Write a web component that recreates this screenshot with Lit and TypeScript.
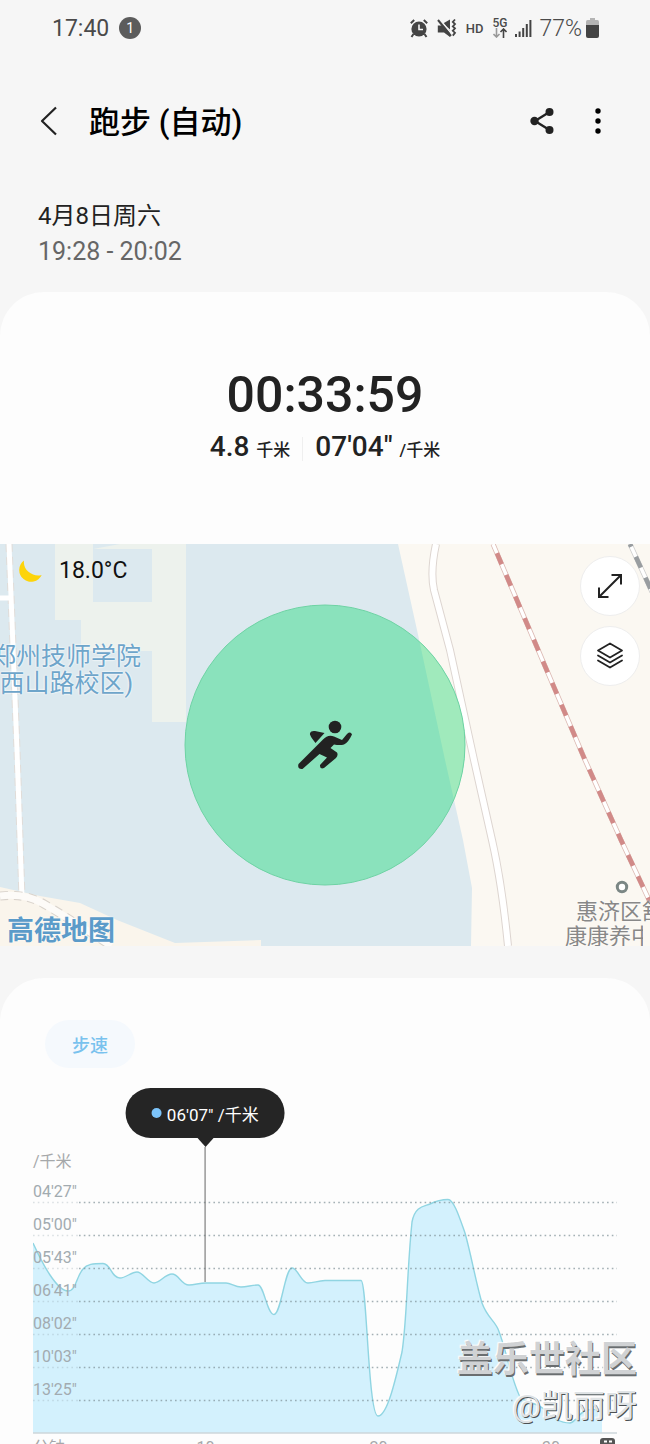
import { LitElement, html, svg, css } from "lit";
import { customElement, property } from "lit/decorators.js";

const sans = css`Roboto, "Noto Sans CJK SC", sans-serif`;

@customElement("status-bar")
class StatusBar extends LitElement {
  static styles = css`
    :host { display: flex; align-items: center; justify-content: space-between; height: 56px; padding: 0 51px 0 52px; color: #4a4a4a; font: 23px ${sans}; }
    .side { display: flex; align-items: center; }
    .badge { display: grid; place-items: center; width: 22px; height: 22px; margin-left: 10px; border-radius: 50%; background: #5c5c5c; color: #fff; font-size: 14px; line-height: 22px; }
    .hd { font-size: 13px; font-weight: 500; margin: 0 9px; }
    .net { display: flex; flex-direction: column; align-items: center; font-size: 12px; line-height: 10px; font-weight: 500; margin-right: 8px; }
    .pct { margin: 0 4px 0 7px; font-weight: 300; }
    svg { display: block; }
    .gap { margin-left: 9px; }
  `;
  render() {
    return html`
      <div class="side"><span>17:40</span><span class="badge">1</span></div>
      <div class="side">
        <svg width="18" height="20" viewBox="0 0 18 20" fill="#444"><circle cx="9" cy="11" r="7.6"/><path d="M0.8 5.2 4.2 2M17.2 5.2 13.8 2M3.5 16 1.5 19M14.5 16l2 3" stroke="#444" stroke-width="2" fill="none"/><path d="M9 6.5V11.5H13" stroke="#f6f6f6" stroke-width="1.6" fill="none"/></svg>
        <svg class="gap" width="20" height="20" viewBox="0 0 20 20"><path d="M6 5.500 13 1.500V11.5Z" fill="#444"/><path d="M0.800 7.500H6.500L13 13V19L7 14.500H0.800Z" fill="#444"/><path d="M3 1.500 14.500 16" stroke="#f6f6f6" stroke-width="1.500"/><path d="M1 2 14 18" stroke="#444" stroke-width="2"/><path d="M18 1.5 15.8 4l2.2 2-2.2 2.4 2.2 2-2.2 2.4 2.2 2-2.2 2.8" stroke="#444" stroke-width="1.8" fill="none"/></svg>
        <span class="hd">HD</span>
        <span class="net">5G
          <svg width="14" height="10" viewBox="0 0 14 10" fill="none" stroke-width="1.6"><path d="M3.5 0V9M0.5 6l3 3 3-3" stroke="#999"/><path d="M10.5 10V1M7.5 4l3-3 3 3" stroke="#444"/></svg>
        </span>
        <svg width="17" height="17" viewBox="0 0 17 17" fill="#444"><path d="M0 14h2v3H0zM3.6 11.5h2V17h-2zM7.2 8h2v9h-2zM10.8 4h2v13h-2zM14.4 0h2v17h-2z"/></svg>
        <span class="pct">77%</span>
        <svg width="13" height="20" viewBox="0 0 13 20"><path d="M4 0h5v2h2.5Q13 2 13 4v5H0V4Q0 2 1.500 2H4z" fill="#b4b4b4"/><path d="M0 7h13v11q0 2-2 2H2q-2 0-2-2z" fill="#444"/></svg>
      </div>`;
  }
}

@customElement("activity-header")
class ActivityHeader extends LitElement {
  static styles = css`
    :host { display: block; font-family: ${sans}; }
    .bar { display: flex; align-items: center; height: 130px; padding: 0 39px 0 36px; }
    h1 { flex: 1; margin: 0 0 0 30px; padding-top: 3px; font-size: 31px; line-height: 40px; font-weight: 500; color: #000; }
    button { display: grid; place-items: center; padding: 0; border: 0; background: none; height: 40px; cursor: pointer; }
    .back { width: 23px; }
    .share { width: 26px; margin-right: 30px; }
    .more { width: 26px; }
    .when { display: flex; flex-direction: column; padding: 12px 38px 22px; font-size: 25px; line-height: 36px; color: #222; }
    .range { color: #666; }
    .day { font-size: 24px; }
  `;
  render() {
    return html`
      <div class="bar">
        <button class="back" aria-label="返回"><svg width="20" height="30" viewBox="0 0 20 30"><path d="M18 1.500 4 15l14 13.500" fill="none" stroke="#222" stroke-width="2.200" stroke-linejoin="round"/></svg></button>
        <h1>跑步 (自动)</h1>
        <button class="share" aria-label="分享"><svg width="26" height="28" viewBox="0 0 26 28"><path d="M20.500 5 6 14l14.500 9" fill="none" stroke="#222" stroke-width="2.400"/><g fill="#222"><circle cx="20.500" cy="5" r="4"/><circle cx="5.500" cy="14" r="4.200"/><circle cx="20.500" cy="23" r="4"/></g></svg></button>
        <button class="more" aria-label="更多"><svg width="6" height="28" viewBox="0 0 6 28"><circle cx="3" cy="4" r="2.700"/><circle cx="3" cy="14" r="2.700"/><circle cx="3" cy="24" r="2.700"/></svg></button>
      </div>
      <div class="when"><span class="day">4月8日周六</span><span class="range">19:28 - 20:02</span></div>`;
  }
}

@customElement("run-summary")
class RunSummary extends LitElement {
  static styles = css`
    :host { display: flex; flex-direction: column; align-items: center; padding: 71px 0 74px; border-radius: 44px 44px 0 0; background: #fdfdfd; color: #222; font-family: ${sans}; font-weight: 500; }
    .time { font-size: 50px; line-height: 64px; }
    .stats { display: flex; align-items: center; line-height: 39px; font-size: 28px; }
    .unit { font-size: 17px; }
    .rule { width: 1px; height: 24px; margin: 0 12px; background: #efefef; }
  `;
  render() {
    return html`
      <div class="time">00:33:59</div>
      <div class="stats">
        <span>4.8 <span class="unit">千米</span></span>
        <span class="rule"></span>
        <span>07'04" <span class="unit">/千米</span></span>
      </div>`;
  }
}

@customElement("route-map")
class RouteMap extends LitElement {
  static styles = css`
    :host { display: grid; position: relative; overflow: hidden; height: 402px; font-family: ${sans}; background: #dce9ef; }
    .ground { grid-area: 1 / 1; width: 100%; height: 402px; }
    .over { grid-area: 1 / 1; display: flex; justify-content: space-between; align-items: flex-start; padding: 12px 10px 0 19px; z-index: 1; }
    .weather { display: flex; align-items: center; gap: 15px; padding-top: 1px; font-size: 23px; line-height: 28px; color: #111; }
    .tools { display: flex; flex-direction: column; gap: 10px; }
    button { display: grid; place-items: center; width: 60px; height: 60px; padding: 0; border: 1px solid #eee; border-radius: 50%; background: #fff; cursor: pointer; }
    .place { position: absolute; white-space: nowrap; }
    .school { left: -9px; top: 99px; font-size: 25px; line-height: 27px; color: #6ea5ca; text-shadow: 0 0 2px #fff, 0 0 2px #fff; }
    .care { left: 565px; top: 355px; width: 78px; font-size: 22px; line-height: 25px; color: #888; text-shadow: 0 0 2px #fff; }
    .indent { padding-left: 11px; }
    .cut { display: block; overflow: hidden; }
    .brand { left: 7px; bottom: 0; font-size: 27px; line-height: 30px; font-weight: 700; color: #5b9bc9; text-shadow: 0 0 2px #fff; }
  `;
  render() {
    return html`
      <svg class="ground" viewBox="0 0 650 402" preserveAspectRatio="xMidYMid slice">
        <rect width="650" height="402" fill="#dce9ef"/>
        <path d="M55 0H93V5L120 0H186V178H152V107H81V76H55Z" fill="#edf2ed"/>
        <path d="M93 5H152V58H93Z" fill="#dce9ef"/>
        <path d="M398 0 417 86 445 216 463 296 472 344 471 402H650V0Z" fill="#fbf8f2"/>
        <path d="M0 343 40 352 80 359 117 376 175 399 261 396V402H0Z" fill="#faf5ec"/>
        <g fill="none">
          <path d="M9 0 17 206 22 354" stroke="#e0dcd8" stroke-width="7" stroke-dasharray="8 5"/>
          <path d="M0 54H12M9 0 17 206 22 354" stroke="#fff" stroke-width="5"/>
          <path d="M0 352Q25 349 44 360T80 382Q97 392 111 402" stroke="#d9d3cc" stroke-width="9" stroke-dasharray="8 6"/>
          <path d="M0 352Q25 349 44 360T80 382Q97 392 111 402" stroke="#fdfbf8" stroke-width="7"/>
          <path d="M436 0Q430 28 434 46L450 106 474 216 492 296Q502 340 508 402" stroke="#ddd5d0" stroke-width="8"/>
          <path d="M436 0Q430 28 434 46L450 106 474 216 492 296Q502 340 508 402" stroke="#fff" stroke-width="6"/>
          <path d="M493 0 585 216 621 296 650 358" stroke="#dcb9b3" stroke-width="5"/>
          <path d="M493 0 585 216 621 296 650 358" stroke="#fff" stroke-width="3.400"/>
          <path d="M493 0 585 216 621 296 650 358" stroke="#d18a88" stroke-width="4.600" stroke-dasharray="12 11.500" stroke-dashoffset="-10"/>
          <path d="M630 0 652 48" stroke="#ccc" stroke-width="5"/>
          <path d="M630 0 652 48" stroke="#fff" stroke-width="3.400"/>
          <path d="M630 0 652 48" stroke="#999da0" stroke-width="4.600" stroke-dasharray="12 11" stroke-dashoffset="-14"/>
        </g>
        <circle cx="325" cy="201" r="140" fill="#8ae2bc"/>
        <clipPath id="zone"><circle cx="325" cy="201" r="140"/></clipPath>
        <path d="M398 0 417 86 445 216 463 296V402H650V0Z" fill="#a0eabc" clip-path="url(#zone)"/>
        <circle cx="325" cy="201" r="140" fill="none" stroke="#6ed3a4"/>
        <g transform="translate(280 156)" fill="#222">
          <circle cx="55" cy="27" r="6.300"/>
          <path d="M30 33Q31 30.500 35 31L44.500 33 35.500 43Q29 35 30 33Z"/>
          <path d="M18.500 64 43 39.500Q48 34 54 36.500L62 40 67 34Q70.500 31 72 34.500 68 43 64 44.500 60 45.500 54 44.500L50.500 48 57 52.500Q58.500 55 56 58L44 68Q39.500 69.500 40 65L47 57.500 39.500 54 22.500 69Q17 69.500 18.500 64Z"/>
        </g>
        <circle cx="622" cy="343" r="4.700" fill="#fff" stroke="#7b8785" stroke-width="3"/>
      </svg>
      <div class="over">
        <div class="weather">
          <svg width="25" height="24" viewBox="0 0 25 24"><path d="M5 1.500A11.800 11.800 0 1 0 22.700 16C15 18.500 3.500 12 5 1.500Z" fill="#fdd40a"/></svg>
          <span>18.0°C</span>
        </div>
        <div class="tools">
          <button aria-label="全屏"><svg width="26" height="26" viewBox="0 0 26 26" fill="none" stroke="#222" stroke-width="2"><path d="M2.500 23.500 23.500 2.500M14.500 2H24V11.500M2 14.500V24H11.500"/></svg></button>
          <button aria-label="图层"><svg width="28" height="28" viewBox="0 0 28 28" fill="none" stroke="#222" stroke-width="1.800" stroke-linejoin="round" stroke-linecap="round"><path d="M14 1.500 26 8.500 14 15.500 2 8.500ZM2 13.500l12 7 12-7M2 18.500l12 7 12-7"/></svg></button>
        </div>
      </div>
      <div class="place school">郑州技师学院<br>(西山路校区)</div>
      <div class="place care"><span class="indent">惠济区舒</span><span class="cut">康康养中</span></div>
      <div class="place brand">高德地图</div>`;
  }
}

const paceTicks = ["04'27\"", "05'00\"", "05'43\"", "06'41\"", "08'02\"", "10'03\"", "13'25\""];
const paceCurve =
  "M0 73C6 86 11 96 17 105S30 121 35 121C43 121 43 107 50 99 54 94 60 93.500 70 93.500 78 93.500 78 108 87 108 93 108 98 102 104 102S115 113 121 113 132 104 139 104 148 115 156 115C162 115 166 113 173 113H193C198 113 202 117 208 117 214 117 219 115 225 115 231 115 234 144.500 241 144.500S252 98 259 98C265 98 268 113 275 113 281 113 284 111 292 110.500H328C334 110.500 335 246 345 246 354 246 362 212 369 182 374 150 374 100 379 52 382 36 391 36.500 397 34 403 31 407 29.500 415 29.500 421 29.500 427 49 432 63 438 84 443 113 449 133 454 147 461 150 465 159 473 178 477 206 487 227 494 234 504 232 512 240 520 248 527 253 537 253 543 252 545 243 554 240L569 239";

@customElement("pace-chart")
class PaceChart extends LitElement {
  @property({ type: String }) reading = "06'07\" /千米";

  static styles = css`
    :host { display: block; padding: 42px 33px 0; border-radius: 44px 44px 0 0; background: #fdfdfd; font-family: ${sans}; }
    .tab { display: block; width: 90px; height: 48px; margin: 0 0 82px 12px; padding: 0; border: 0; border-radius: 24px; background: #f5f9fd; color: #79c2ee; font: 500 18px ${sans}; cursor: pointer; }
    .unit { display: block; height: 20px; font-size: 16px; line-height: 24px; color: #a5a8aa; }
    .plot { display: grid; position: relative; }
    .curve { grid-area: 1 / 1; width: 100%; height: 264px; display: block; }
    .ticks { grid-area: 1 / 1; list-style: none; margin: 0; padding: 0; z-index: 1; }
    .ticks li { height: 33px; line-height: 44px; font-size: 16px; color: #a2abb0; }
    .tip { position: absolute; left: 29.5%; bottom: 152px; transform: translateX(-50%); display: flex; flex-direction: column; align-items: center; z-index: 2; }
    .bubble { display: flex; align-items: center; gap: 5px; box-sizing: border-box; height: 50px; padding: 0 26px; border-radius: 25px; background: #252525; color: #fff; font-size: 17px; white-space: nowrap; }
    .dot { width: 10px; height: 10px; border-radius: 50%; background: #7cc4fa; }
    .arrow { border: 8px solid transparent; border-top: 9px solid #252525; border-bottom: 0; }
    .stem { width: 1px; height: 135px; background: #666; }
    .axis { display: grid; grid-template-columns: 86fr 173fr 173fr 64fr 44fr 44fr; padding-top: 4px; font-size: 16px; line-height: 20px; color: #a5a8aa; }
    .mid { text-align: center; }
    .thirty { grid-column: 5; text-align: center; }
    .end { justify-self: end; }
  `;
  render() {
    return html`
      <button class="tab">步速</button>
      <span class="unit">/千米</span>
      <div class="plot">
        <svg class="curve" viewBox="0 0 584 264" preserveAspectRatio="none" fill="none">
          <path d="${paceCurve}V263H0Z" fill="#d3f1fd"/>
          <path d="${paceCurve}" stroke="#90d5e2" stroke-width="1.400"/>
          ${paceTicks.map((_, i) => svg`
            <path d="M0 ${i * 33 + 32.5}H46" stroke="#8fa0a8" stroke-opacity=".3" stroke-width="1.400" stroke-dasharray="1.600 3.200"/>
            <path d="M46 ${i * 33 + 32.5}H584" stroke="#7d8e96" stroke-opacity=".7" stroke-width="1.400" stroke-dasharray="1.600 3.200"/>`)}
          <path d="M0 263H584" stroke="#cdd6da" stroke-width="1.400"/>
        </svg>
        <ol class="ticks">${paceTicks.map((t) => html`<li>${t}</li>`)}</ol>
        <div class="tip">
          <div class="bubble"><span class="dot"></span><span>${this.reading}</span></div>
          <span class="arrow"></span>
          <span class="stem"></span>
        </div>
      </div>
      <div class="axis">
        <span>分钟</span><span class="mid">10</span><span class="mid">20</span><span class="thirty">30</span>
        <svg class="end" width="18" height="18" viewBox="0 0 18 18"><rect x="1" y="0" width="15" height="15" rx="3" fill="#555"/><path d="M5 3.500h3M10 3.500h3" stroke="#fff" stroke-width="2"/></svg>
      </div>`;
  }
}

@customElement("app-root")
class AppRoot extends LitElement {
  static styles = css`
    :host { display: block; position: relative; height: 100vh; overflow: hidden auto; scrollbar-width: none; background: #f6f6f6; }
    main { display: flex; flex-direction: column; }
    pace-chart { margin-top: 32px; }
    .mark { position: absolute; right: 13px; top: 1336px; display: flex; flex-direction: column; align-items: flex-end; font-family: ${sans}; color: #d0d2d4; font-size: 36px; line-height: 48px; font-weight: 700; text-shadow: 1px 2px 0 #6a6e70, -1px -1px 1px #fff; pointer-events: none; z-index: 3; }
    .user { font-size: 32px; line-height: 44px; font-weight: 400; color: #dfe3e5; text-shadow: 1px 1px 0 #4c5052, -1px -1px 1px #fff; }
  `;
  render() {
    return html`
      <status-bar></status-bar>
      <main>
        <activity-header></activity-header>
        <run-summary></run-summary>
        <route-map></route-map>
        <pace-chart></pace-chart>
      </main>
      <div class="mark"><span>盖乐世社区</span><span class="user">@凯丽呀</span></div>`;
  }
}
